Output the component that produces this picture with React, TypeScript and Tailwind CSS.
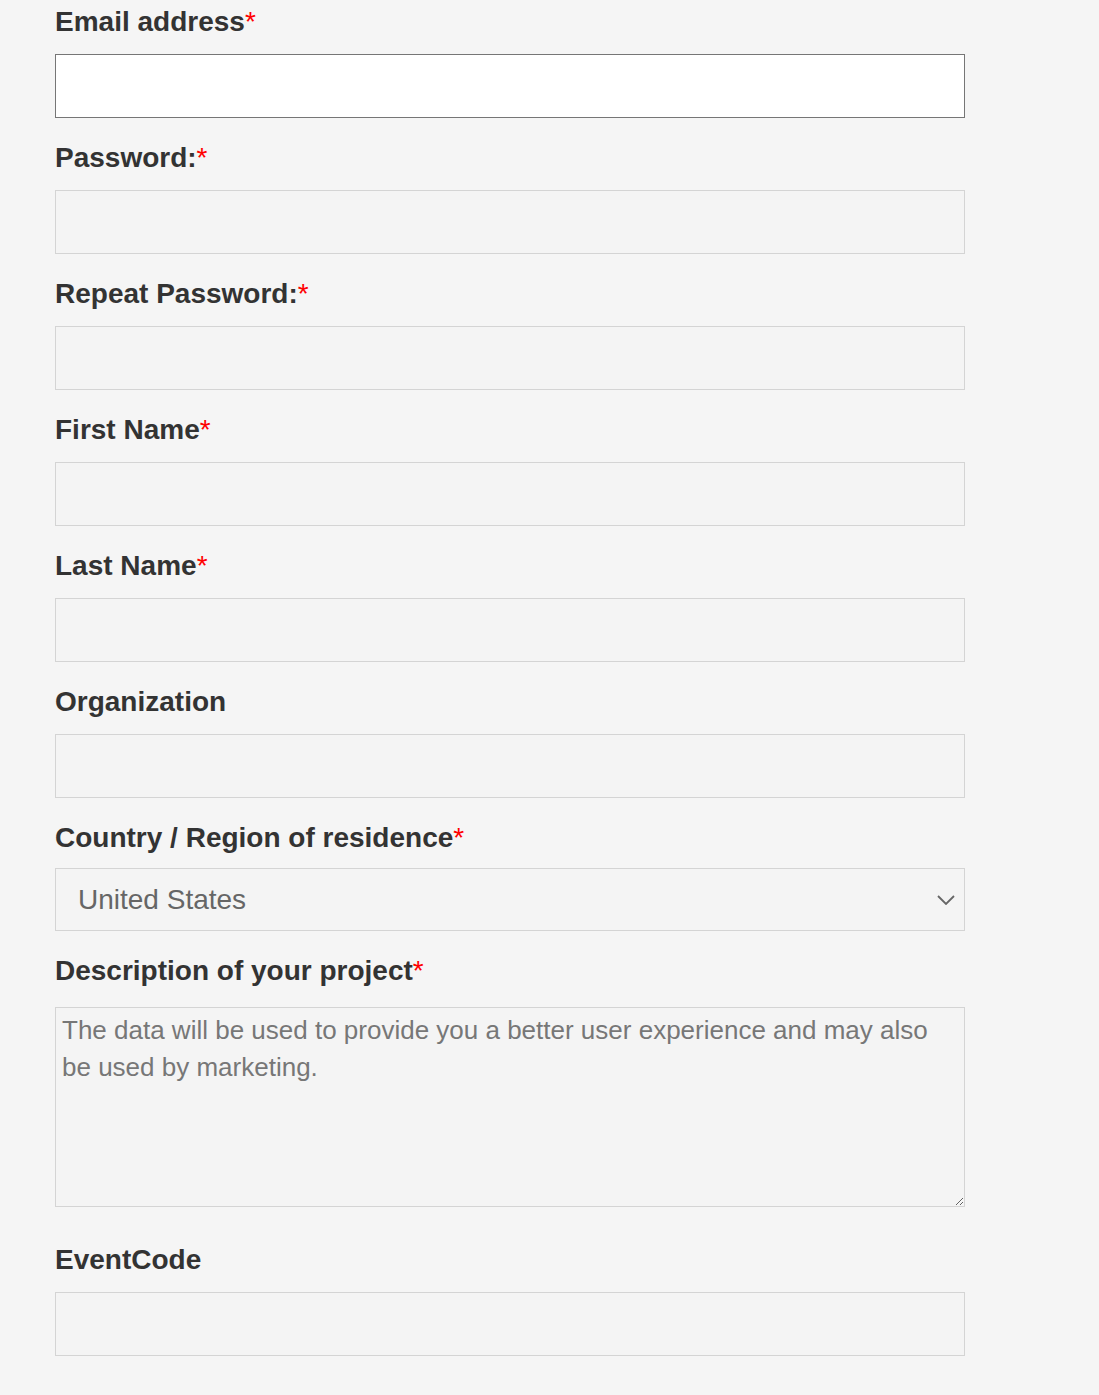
const Label = ({ text, required }: { text: string; required?: boolean }) => (
  <label className="block text-[28px] leading-[36px] font-bold text-[#333] mb-[14px]">
    {text}
    {required && <span className="text-[#ff0000] font-normal">*</span>}
  </label>
);

const inputBase = 'block w-[910px] h-[64px] border px-4 text-[24px] outline-none';

const App = () => {
  const fields = [
    { label: 'Password:', required: true, type: 'password' },
    { label: 'Repeat Password:', required: true, type: 'password' },
    { label: 'First Name', required: true, type: 'text' },
    { label: 'Last Name', required: true, type: 'text' },
    { label: 'Organization', required: false, type: 'text' },
  ];

  return (
    <div className="min-h-[1395px] bg-[#f5f5f5] pt-[4px] pl-[55px] font-['Liberation_Sans',Arial,sans-serif]">
      {/* Email */}
      <div className="mb-[22px]">
        <Label text="Email address" required />
        <input type="email" className={`${inputBase} bg-white border-[#767676]`} />
      </div>

      {fields.map((f) => (
        <div key={f.label} className="mb-[22px]">
          <Label text={f.label} required={f.required} />
          <input type={f.type} className={`${inputBase} bg-[#f4f4f4] border-[#d4d4d4]`} />
        </div>
      ))}

      {/* Country */}
      <div className="mb-[22px]">
        <label className="block text-[28px] leading-[36px] font-bold text-[#333] mb-[12px]">
          Country / Region of residence<span className="text-[#ff0000] font-normal">*</span>
        </label>
        <div className="relative w-[910px]">
          <select
            defaultValue="United States"
            className="block w-full h-[63px] appearance-none bg-[#f4f4f4] border border-[#d4d4d4] pl-[22px] pr-12 text-[28px] text-[#666] outline-none"
          >
            <option>United States</option>
            <option>Canada</option>
            <option>United Kingdom</option>
          </select>
          <svg
            className="absolute right-[10px] top-[27px] pointer-events-none"
            width="18"
            height="10"
            viewBox="0 0 18 10"
            fill="none"
          >
            <polyline points="1,1 9,9 17,1" stroke="#666" strokeWidth="1.8" />
          </svg>
        </div>
      </div>

      {/* Description */}
      <div className="mb-[35px]">
        <label className="block text-[28px] leading-[36px] font-bold text-[#333] mb-[18px]">
          Description of your project<span className="text-[#ff0000] font-normal">*</span>
        </label>
        <textarea
          className="block w-[910px] h-[200px] bg-[#f4f4f4] border border-[#d4d4d4] px-[6px] py-[4px] text-[26px] leading-[37px] text-[#333] placeholder:text-[#777] outline-none"
          placeholder="The data will be used to provide you a better user experience and may also be used by marketing."
        />
      </div>

      {/* EventCode */}
      <div>
        <Label text="EventCode" />
        <input type="text" className={`${inputBase} bg-[#f4f4f4] border-[#d4d4d4]`} />
      </div>
    </div>
  );
};

export default App;
